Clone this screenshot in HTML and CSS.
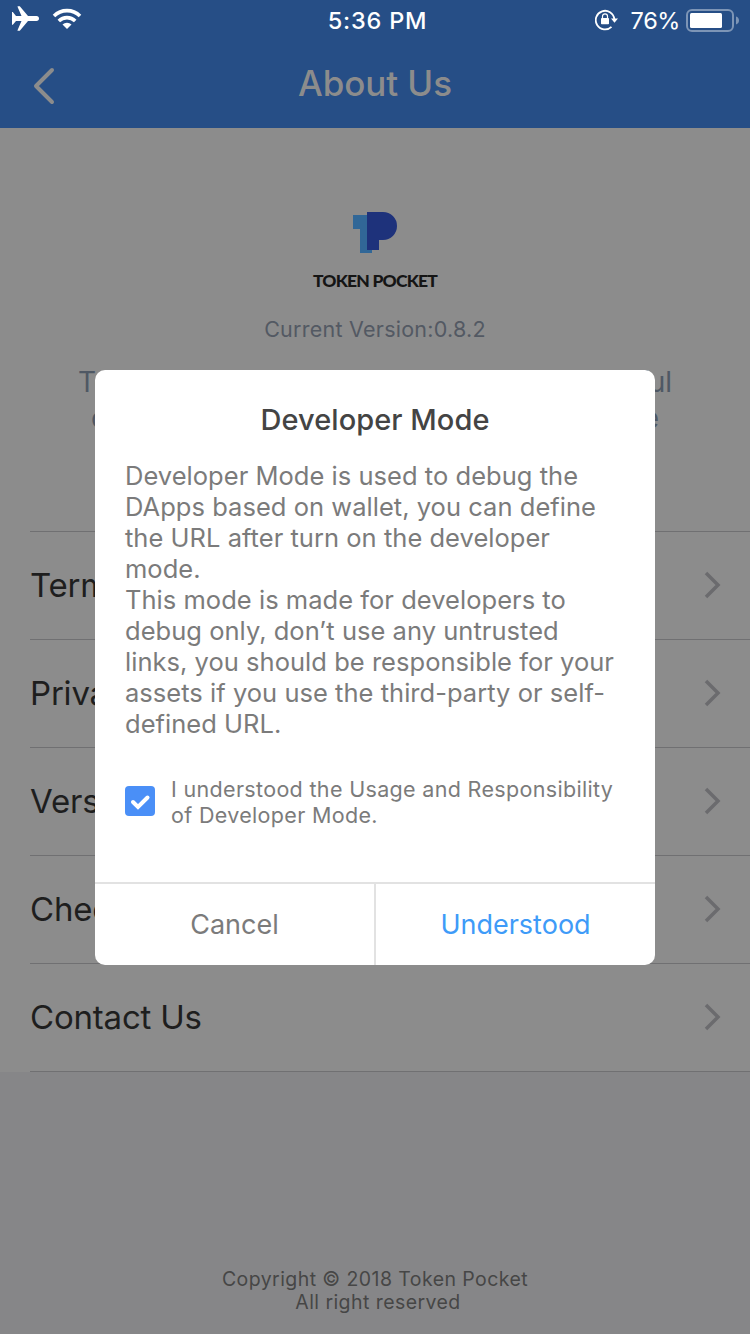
FILE: index.html
```html
<!DOCTYPE html>
<html lang="en">
<head>
<meta charset="utf-8">
<title>About Us</title>
<link rel="stylesheet" href="styles.css">
</head>
<body>
<div class="screen">
  <header class="header">
    <div class="status">
      <div class="status-left">
        <svg class="plane" width="28" height="26" viewBox="0 0 28 26"><path fill="#fff" d="M0 6h.8L4 10h5.500L5.500.8Q5.300.300 6 .300h1.800L16 10h8.500c1.600 0 2.500 1.100 2.500 2.500S26.100 15 24.500 15H16L7.800 24.700H6q-.7 0-.5-.5L9.500 15H4L.8 18.800H0z"/></svg>
        <svg class="wifi" width="30" height="22" viewBox="0 0 30 22"><g fill="none" stroke="#fff" stroke-width="3.600"><path d="M2 8a18.500 18.500 0 0 1 26 0"/><path d="M6.800 13a11.700 11.700 0 0 1 16.400 0"/></g><path fill="#fff" d="M15 21l-4.500-4.500a6.400 6.400 0 0 1 9 0z"/></svg>
      </div>
      <span class="time">5:36 PM</span>
      <div class="status-right">
        <svg class="lock" width="23" height="22" viewBox="0 0 23 22"><path d="M19.300 10A9.300 9.300 0 1 0 16.500 17.800" fill="none" stroke="#fff" stroke-width="1.800"/><path fill="#fff" d="M16 9.500h7l-3.500 4.200z"/><rect x="6" y="9" width="8" height="6.200" rx=".8" fill="#fff"/><path d="M7.500 10V7.300a2.500 2.500 0 0 1 5 0V10" fill="none" stroke="#fff" stroke-width="1.200"/></svg>
        <span class="percent">76%</span>
        <svg class="battery" width="53" height="23" viewBox="0 0 53 23"><rect x="1" y="1" width="46" height="21" rx="5" fill="none" stroke="#7d95b6" stroke-width="2"/><rect x="4" y="4" width="32" height="15" rx="1.500" fill="#fff"/><path d="M50 7.500c2 .6 3 2.200 3 4s-1 3.400-3 4z" fill="#7d95b6"/></svg>
      </div>
    </div>
    <div class="nav">
      <svg class="back" width="24" height="38" viewBox="0 0 24 38"><path d="M20 3L4 19l16 16" fill="none" stroke="#8c8c8c" stroke-width="4" stroke-linecap="round" stroke-linejoin="round"/></svg>
      <h1 class="nav-title">About Us</h1>
    </div>
  </header>
  <section class="brand">
    <svg class="logo" width="44" height="43" viewBox="0 0 44 43"><path fill="#316797" d="M0 3h14v35h5v3H7V17H0z"/><path fill="#1e327b" d="M14 0h16a14 14 0 0 1 0 28h-4v10H14z"/></svg>
    <div class="brand-name">TOKEN POCKET</div>
    <div class="version">Current Version:0.8.2</div>
    <div class="intro intro-first">Token Pocket is a convenient and powerful</div>
    <div class="intro intro-second">crypto wallet, secure and easy to use</div>
  </section>
  <ul class="menu">
    <li class="item"><span>Terms of Use</span><svg class="chevron" width="18" height="28" viewBox="0 0 18 28"><path d="M2 2l12 12L2 26"/></svg></li>
    <li class="item"><span>Privacy Policy</span><svg class="chevron" width="18" height="28" viewBox="0 0 18 28"><path d="M2 2l12 12L2 26"/></svg></li>
    <li class="item"><span>Version Log</span><svg class="chevron" width="18" height="28" viewBox="0 0 18 28"><path d="M2 2l12 12L2 26"/></svg></li>
    <li class="item"><span>Check Update</span><svg class="chevron" width="18" height="28" viewBox="0 0 18 28"><path d="M2 2l12 12L2 26"/></svg></li>
    <li class="item"><span>Contact Us</span><svg class="chevron" width="18" height="28" viewBox="0 0 18 28"><path d="M2 2l12 12L2 26"/></svg></li>
  </ul>
  <footer class="copyright"><div class="copy-owner">Copyright © 2018 Token Pocket</div><div class="copy-rights">All right reserved</div></footer>
</div>
<div class="dialog">
  <h2 class="dialog-title">Developer Mode</h2>
  <p class="dialog-text">Developer Mode is used to debug the<br>DApps based on wallet, you can define<br>the URL after turn on the developer<br>mode.<br>This mode is made for developers to<br>debug only, don’t use any untrusted<br>links, you should be responsible for your<br>assets if you use the third-party or self-<br>defined URL.</p>
  <div class="agree">
    <span class="checkbox"><svg width="30" height="30" viewBox="0 0 30 30"><path d="M8 16l5 5 9.500-9.500" fill="none" stroke="#fff" stroke-width="4" stroke-linecap="round"/></svg></span>
    <p class="agree-text">I understood the Usage and Responsibility<br>of Developer Mode.</p>
  </div>
  <div class="actions"><div class="action cancel">Cancel</div><div class="action confirm">Understood</div></div>
</div>
</body>
</html>
```
FILE: styles.css
```css
* { box-sizing: border-box; margin: 0; padding: 0; }
body { width: 750px; height: 1334px; overflow: hidden; position: relative; font-family: Inter, "Liberation Sans", sans-serif; background: #868688; white-space: nowrap; }
svg { display: block; flex: none; }
.screen { display: flex; flex-direction: column; height: 1334px; }
.header { height: 128px; background: #264e86; }
.status { height: 40px; display: grid; grid-template-columns: 1fr auto 1fr; align-items: center; color: #fff; }
.status-left { display: flex; align-items: center; gap: 12px; padding: 0 0 2px 12px; }
.time { font-size: 23.500px; font-weight: 500; letter-spacing: .8px; line-height: 38px; padding: 1px 0 0 5px; }
.status-right { display: flex; align-items: center; justify-content: flex-end; padding-right: 11px; }
.percent { font-size: 23.500px; letter-spacing: -.4px; margin: 0 6px 0 13px; line-height: 38px; padding-top: 2px; }
.nav { height: 88px; display: grid; grid-template-columns: 32px 1fr 32px; align-items: center; }
.back { margin: 4px 0 0 32px; }
.nav-title { color: #8c8c8c; font-size: 35px; font-weight: 450; letter-spacing: -.1px; line-height: 86px; padding-bottom: 2px; text-align: center; }
.brand { height: 403px; padding-top: 84px; background: #8c8c8c; display: flex; flex-direction: column; align-items: center; }
.brand-name { font-family: Lato, sans-serif; font-size: 17.500px; font-weight: 900; color: #151515; line-height: 20px; margin-top: 16px; letter-spacing: -.8px; }
.version { font-size: 21.500px; letter-spacing: .25px; line-height: 28px; margin-top: 24px; color: #535963; }
.intro { font-size: 28px; line-height: 36px; color: #4f5864; text-align-last: justify; }
.intro-first { width: 594px; margin-top: 21px; }
.intro-second { width: 568px; }
.menu { list-style: none; height: 541px; background: linear-gradient(#707072, #707072) 30px 0 / 720px 1px no-repeat #8c8c8c; padding: 1px 0 0 30px; }
.item { height: 108px; display: flex; align-items: center; justify-content: space-between; border-bottom: 1px solid #707072; font-size: 33px; letter-spacing: -.2px; color: #1e1e1e; padding: 0 28.500px 2px 0; }
.chevron path { fill: none; stroke: #6b6b6e; stroke-width: 3.500; }
.copyright { margin-top: auto; padding-bottom: 20px; text-align: center; font-size: 19.500px; letter-spacing: .43px; line-height: 23px; color: #464646; }
.copy-rights { padding-left: 6px; }
.dialog { position: absolute; left: 95px; top: 369.500px; width: 560px; height: 595px; border-radius: 10px; background: #fff; overflow: hidden; display: flex; flex-direction: column; }
.dialog-title { font-size: 29px; font-weight: 500; letter-spacing: .05px; line-height: 36px; margin-top: 32px; text-align: center; color: #444; }
.dialog-text { font-size: 25.500px; letter-spacing: .03px; line-height: 31px; margin: 22px 0 0 30px; color: #7b7b7b; }
.agree { display: flex; gap: 16px; margin: 37px 0 0 30px; }
.checkbox { width: 30px; height: 30px; border-radius: 4px; background: #4a8ff7; margin-top: 10px; }
.agree-text { font-size: 21.500px; letter-spacing: .33px; line-height: 26px; color: #7b7b7b; }
.actions { display: grid; grid-template-columns: 281px 279px; height: 83px; margin-top: auto; border-top: 2px solid #e2e2e2; font-size: 27px; line-height: 82px; text-align: center; }
.cancel { color: #7b7b7b; border-right: 2px solid #e2e2e2; }
.confirm { color: #3e9bf8; }
```
